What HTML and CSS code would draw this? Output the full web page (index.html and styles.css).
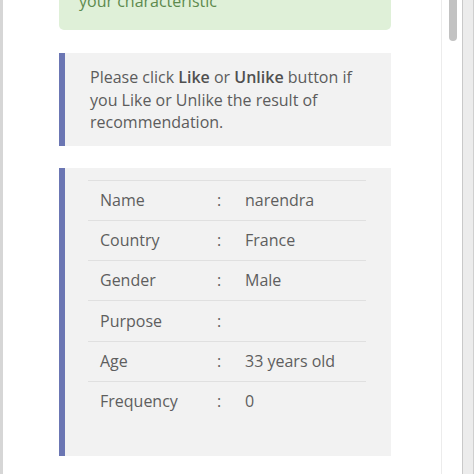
FILE: index.html
```html
<!DOCTYPE html>
<html>
<head>
<meta charset="utf-8">
<link rel="stylesheet" href="styles.css">
</head>
<body>
<div class="frame">
  <div class="content">
    <div class="alert-success">your characteristic</div>
    <div class="note">Please click <b>Like</b> or <b>Unlike</b> button if you Like or Unlike the result of recommendation.</div>
    <div class="note profile">
      <div class="table">
        <div class="row"><span class="label">Name</span><span class="colon">:</span><span class="value">narendra</span></div>
        <div class="row"><span class="label">Country</span><span class="colon">:</span><span class="value">France</span></div>
        <div class="row"><span class="label">Gender</span><span class="colon">:</span><span class="value">Male</span></div>
        <div class="row"><span class="label">Purpose</span><span class="colon">:</span><span class="value"></span></div>
        <div class="row"><span class="label">Age</span><span class="colon">:</span><span class="value">33 years old</span></div>
        <div class="row"><span class="label">Frequency</span><span class="colon">:</span><span class="value">0</span></div>
      </div>
    </div>
  </div>
  <div class="scrollbar"><div class="thumb"></div></div>
  <div class="edge"></div>
</div>
</body>
</html>
```
FILE: styles.css
```css
html, body {
  margin: 0;
  padding: 0;
  background: #fff;
  overflow: hidden;
}
body {
  font-family: "Open Sans", "DejaVu Sans", sans-serif;
  font-size: 16px;
  color: #5c5c5c;
}
.frame {
  display: flex;
  height: 474px;
  width: 474px;
  overflow: hidden;
}
.content {
  width: 441px;
  border-left: 3px solid #d6d6d6;
  padding-left: 56px;
  box-sizing: border-box;
  flex: none;
}
.alert-success {
  width: 332px;
  box-sizing: border-box;
  background: #dff0d8;
  color: #5d8a4e;
  font-size: 16px;
  line-height: 22px;
  margin-top: -10px;
  padding: 0 20px 18px 20px;
  border-radius: 0 0 5px 5px;
}
.note {
  width: 332px;
  box-sizing: border-box;
  background: #f2f2f2;
  border-left: 6px solid #6b76b3;
  margin-top: 23px;
  padding: 13px 20px 12px 25px;
  line-height: 22.6px;
}
.note b {
  font-weight: 600;
  color: #505050;
}
.profile {
  margin-top: 22px;
  padding: 12px 25px 35px 23px;
}
.table {
  border-top: 1px solid #e0e0e0;
}
.row {
  display: grid;
  grid-template-columns: 117px 28px 1fr;
  height: 39.2px;
  align-items: center;
  padding-left: 12px;
  border-bottom: 1px solid #e0e0e0;
  color: #5e5e5e;
}
.row:last-child {
  border-bottom: none;
}
.scrollbar {
  width: 22px;
  flex: none;
  border-left: 1px solid #ececec;
  border-right: 1px solid #c9c9c9;
  box-sizing: border-box;
  background: #fff;
}
.thumb {
  margin-left: 7px;
  width: 8px;
  height: 47px;
  margin-top: -6px;
  background: #c2c2c2;
  border-radius: 4px;
}
.edge {
  flex: 1;
  background: #ececec;
  border-right: 1px solid #cfcfcf;
}
```
